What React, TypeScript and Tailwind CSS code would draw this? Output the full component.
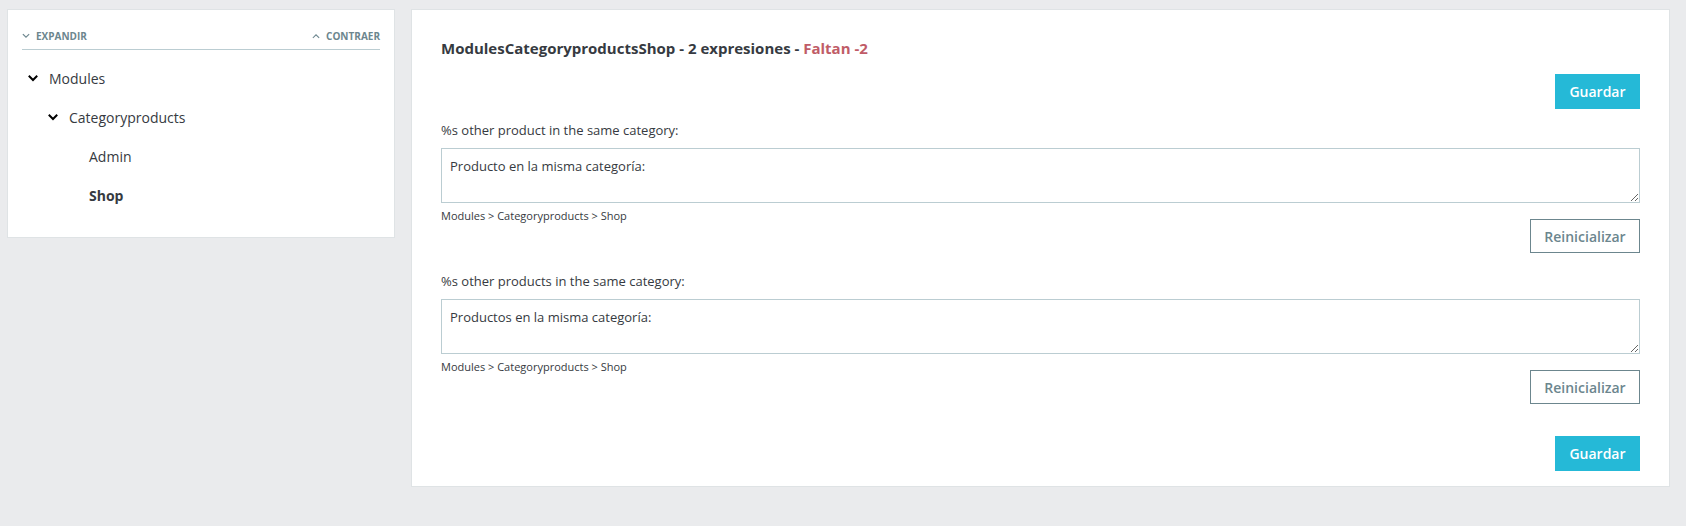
import React from 'react';

const font = { fontFamily: '"Open Sans", "Noto Sans", Arial, sans-serif' };

const Chevron: React.FC<{ up?: boolean; thin?: boolean }> = ({ up, thin }) => (
  <svg
    width={thin ? 8 : 10}
    height={thin ? 6 : 7}
    viewBox="0 0 10 7"
    fill="none"
    stroke="currentColor"
    strokeWidth={thin ? 1.3 : 2}
    strokeLinecap="square"
  >
    {up ? <polyline points="1.5,5.5 5,2 8.5,5.5" /> : <polyline points="1.5,1.5 5,5 8.5,1.5" />}
  </svg>
);

const TreeRow: React.FC<{ level: number; label: string; open?: boolean; active?: boolean }> = ({ level, label, open, active }) => {
  const pad = level === 0 ? 'pl-[6px]' : level === 1 ? 'pl-[26px]' : 'pl-[67px]';
  return (
    <div className={`flex items-center h-[39px] ${pad}`}>
      {open && (
        <span className="w-[21px] flex items-center text-black">
          <Chevron />
        </span>
      )}
      <span className={`text-[14px] ${active ? 'font-bold text-[#363a41]' : 'text-[#363a41]'}`}>{label}</span>
    </div>
  );
};

const Entry: React.FC<{ label: string; value: string; first?: boolean }> = ({ label, value, first }) => (
  <div>
    <div className={`${first ? 'mt-[11px]' : 'mt-[18px]'} text-[13px] leading-[20px] text-[#363a41]`}>{label}</div>
    <textarea
      defaultValue={value}
      className="mt-[8px] block w-full h-[55px] border border-[#bbcdd2] px-[8px] py-[7px] text-[13px] leading-[20px] text-[#363a41] outline-none"
      style={font}
    />
    <div className="mt-[4px] flex justify-between items-start">
      <span className="text-[11px] leading-[18px] text-[#363a41]">Modules &gt; Categoryproducts &gt; Shop</span>
      <button className="mt-[12px] w-[110px] h-[34px] border border-[#6c868e] text-[#6c868e] text-[14px] font-semibold bg-white">
        Reinicializar
      </button>
    </div>
  </div>
);

const App: React.FC = () => {
  return (
    <div className="min-h-screen bg-[#eaebed] pt-[9px] pl-[7px] pr-[16px]" style={font}>
      <div className="flex items-start gap-[16px]">
        {/* Tree */}
        <div className="w-[388px] shrink-0 bg-white border border-[#dfe3e5] pt-[20px] px-[14px] pb-[22px]">
          <div className="flex justify-between items-center leading-[12px] pb-[7px] border-b border-[#bbcdd2] text-[10px] font-bold text-[#6c868e] uppercase">
            <span className="flex items-center gap-[6px]">
              <Chevron thin />
              Expandir
            </span>
            <span className="flex items-center gap-[6px]">
              <Chevron thin up />
              Contraer
            </span>
          </div>
          <div className="mt-[9px]">
            <TreeRow level={0} label="Modules" open />
            <TreeRow level={1} label="Categoryproducts" open />
            <TreeRow level={2} label="Admin" />
            <TreeRow level={2} label="Shop" active />
          </div>
        </div>

        {/* Translations */}
        <div className="flex-1 bg-white border border-[#dfe3e5] pt-[27px] px-[29px] pb-[15px]">
          <h2 className="text-[15px] leading-[22px] font-bold text-[#363a41]">
            ModulesCategoryproductsShop - 2 expresiones - <span className="text-[#c05c67]">Faltan -2</span>
          </h2>
          <div className="mt-[15px] flex justify-end">
            <button className="w-[85px] h-[35px] bg-[#25b9d7] text-white text-[14px] font-semibold">Guardar</button>
          </div>
          <Entry first label="%s other product in the same category:" value="Producto en la misma categoría:" />
          <Entry label="%s other products in the same category:" value="Productos en la misma categoría:" />
          <div className="mt-[32px] flex justify-end">
            <button className="w-[85px] h-[35px] bg-[#25b9d7] text-white text-[14px] font-semibold">Guardar</button>
          </div>
        </div>
      </div>
    </div>
  );
};

export default App;
